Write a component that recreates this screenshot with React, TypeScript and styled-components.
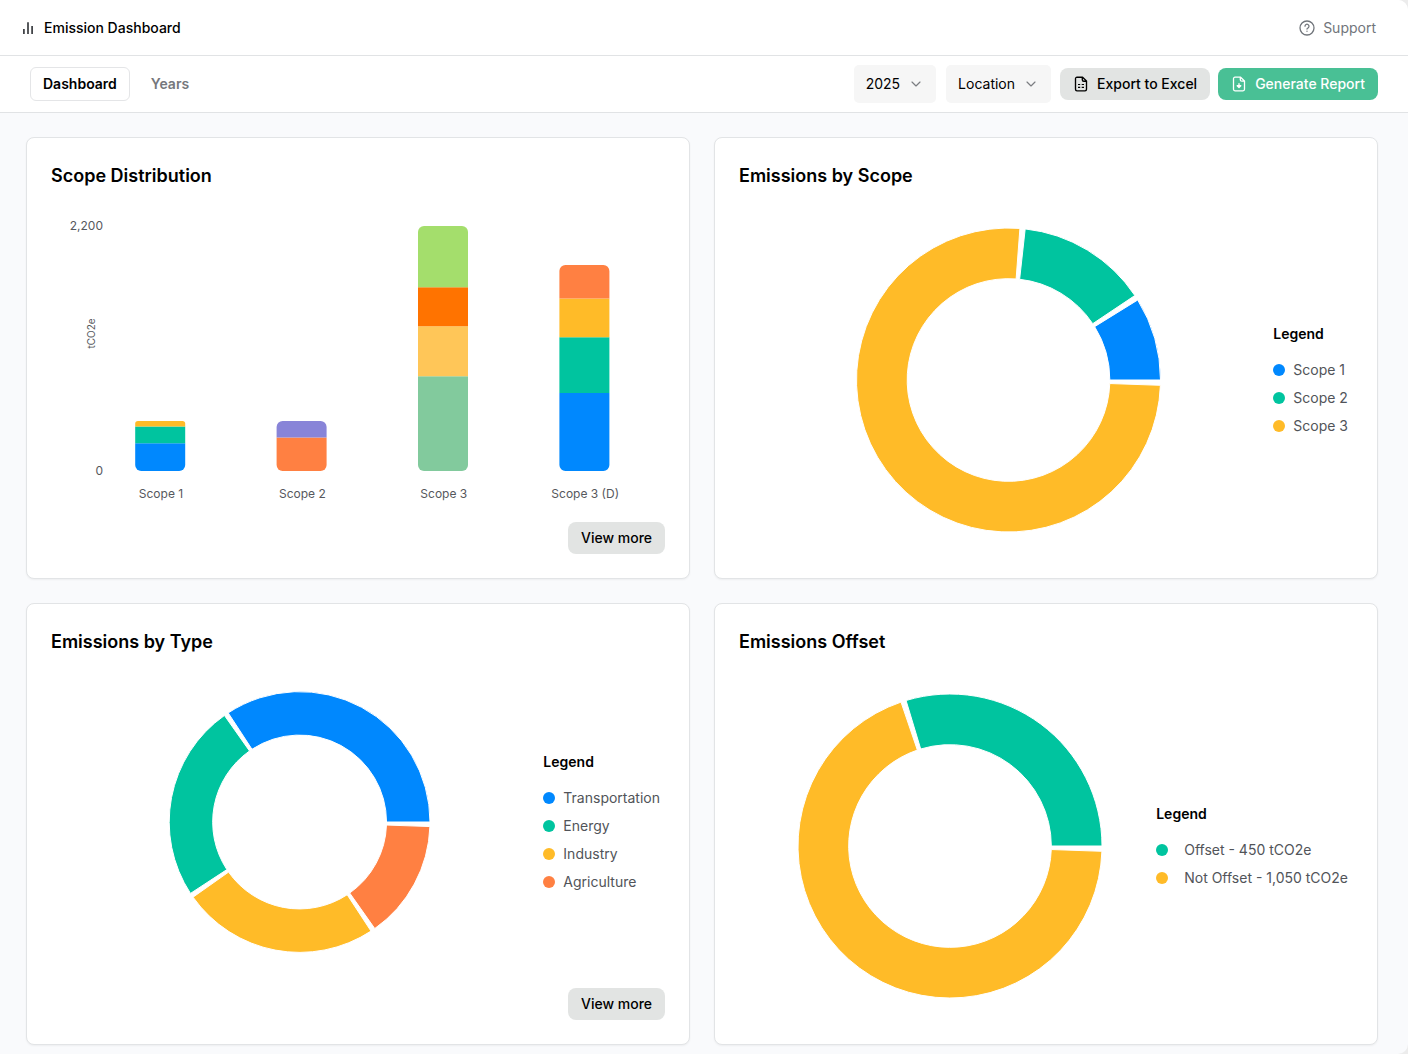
import React from 'react';
import styled, { createGlobalStyle } from 'styled-components';
import { ChevronDown } from 'lucide-react';

const GlobalStyle = createGlobalStyle`
  *, *::before, *::after { box-sizing: border-box; }
  body {
    margin: 0;
    background: #ececec;
    font-family: Inter, "Liberation Sans", sans-serif;
    font-size: 14px;
    line-height: 20px;
    color: #000;
    overflow: hidden;
  }
`;

const Window = styled.div`
  display: flex;
  flex-direction: column;
  height: 1054px;
  background: #f9fafc;
  border-radius: 0 10px 10px 0;
  overflow: hidden;
`;

const Bar = styled.header<{ $height: number; $padding: string }>`
  display: flex;
  flex: none;
  align-items: center;
  justify-content: space-between;
  height: ${(p) => p.$height}px;
  padding: ${(p) => p.$padding};
  background: #fff;
  border-bottom: 1px solid #e1e3e5;
`;

const Cluster = styled.div<{ $gap: number }>`
  display: flex;
  align-items: center;
  gap: ${(p) => p.$gap}px;
`;

const Brand = styled.h1`
  margin: 0;
  font-size: 14px;
  font-weight: 500;
  line-height: 20px;
`;

const Support = styled.a`
  display: flex;
  align-items: center;
  gap: 8px;
  color: #71757b;
`;

const Tab = styled.button<{ $active?: boolean }>`
  height: 34px;
  padding: 0 12px;
  border: 1px solid ${(p) => (p.$active ? '#e4e5e7' : 'transparent')};
  border-radius: 6px;
  background: #fff;
  color: ${(p) => (p.$active ? '#000' : '#75777c')};
  font: 600 14px/20px Inter, sans-serif;
`;

const Select = styled.button`
  display: flex;
  align-items: center;
  gap: 8px;
  height: 38px;
  padding: 0 12px;
  border: 0;
  border-radius: 5px;
  background: #f6f6f6;
  color: #000;
  font: 400 14px/20px Inter, sans-serif;
  svg { color: #7b7d81; }
`;

const Button = styled.button<{ $primary?: boolean }>`
  display: flex;
  align-items: center;
  gap: 8px;
  height: 32px;
  padding: 0 13px;
  border: 0;
  border-radius: 8px;
  background: ${(p) => (p.$primary ? '#49c095' : '#e2e4e3')};
  color: ${(p) => (p.$primary ? '#fff' : '#000')};
  font: 500 14px/20px Inter, sans-serif;
`;

const Grid = styled.main`
  display: grid;
  grid-template-columns: 664px 664px;
  grid-auto-rows: 442px;
  gap: 24px;
  padding: 24px 26px;
`;

const Card = styled.section`
  display: flex;
  flex-direction: column;
  padding: 24px;
  border: 1px solid #e2e4e6;
  border-radius: 8px;
  background: #fff;
  box-shadow: 0 1px 2px rgba(0, 0, 0, 0.05);
`;

const CardTitle = styled.h2`
  margin: 0 0 -1px;
  font-size: 18px;
  font-weight: 600;
  line-height: 28px;
`;

const CardBody = styled.div`
  display: flex;
  flex: 1;
  align-items: center;
  justify-content: space-between;
  min-height: 0;
`;

const CardFooter = styled.footer`
  display: flex;
  justify-content: flex-end;
`;

const Plot = styled.div<{ $left?: number; $top?: number }>`
  display: flex;
  align-self: flex-start;
  padding: ${(p) => p.$top ?? 0}px 0 0 ${(p) => p.$left ?? 0}px;
  svg { display: block; overflow: visible; }
`;

const LegendBox = styled.div<{ $right: number; $top: number }>`
  align-self: flex-start;
  padding: ${(p) => p.$top}px ${(p) => p.$right}px 0 0;
`;

const LegendTitle = styled.h3`
  margin: 0 0 16px;
  font-size: 14px;
  font-weight: 600;
  line-height: 20px;
`;

const LegendList = styled.ul`
  display: grid;
  gap: 8px;
  margin: 0;
  padding: 0;
  list-style: none;
`;

const LegendItem = styled.li<{ $gap: number }>`
  display: flex;
  align-items: center;
  gap: ${(p) => p.$gap}px;
  color: #515459;
  white-space: nowrap;
`;

const Dot = styled.span<{ $color: string }>`
  width: 12px;
  height: 12px;
  border-radius: 50%;
  background: ${(p) => p.$color};
`;

const AxisText = styled.text<{ $size?: number }>`
  fill: #56585d;
  font-size: ${(p) => p.$size ?? 12}px;
`;

const BLUE = '#0088FE';
const GREEN = '#00C49F';
const YELLOW = '#FFBB28';
const ORANGE = '#FF8042';

type Datum = { label: string; value: number; color: string };

const BrandIcon = () => (
  <svg width="16" height="16" viewBox="0 0 16 16" fill="none" stroke="#3a3c40" strokeWidth="1.7">
    <path d="M3.9 9v5M8 2.2V14M12.1 6v8" />
  </svg>
);

const HelpIcon = () => (
  <svg width="16" height="16" viewBox="0 0 16 16" fill="none" stroke="currentColor" strokeWidth="1.3" strokeLinecap="round" strokeLinejoin="round">
    <circle cx="8" cy="8" r="7" />
    <path d="M6 6.2a2 2 0 1 1 3.1 1.7C8.4 8.3 8 8.5 8 9.1M8 11.2v.1" />
  </svg>
);

const SheetIcon = () => (
  <svg width="16" height="16" viewBox="0 0 16 16" fill="none" stroke="currentColor" strokeWidth="1.35" strokeLinejoin="round">
    <path d="M9.6 1.2H4A1.5 1.5 0 0 0 2.5 2.7v10.6A1.5 1.5 0 0 0 4 14.8h8a1.5 1.5 0 0 0 1.5-1.5V5zM9.3 1.3v2.4A1.5 1.5 0 0 0 10.8 5.2h2.6" />
    <path strokeWidth="1.15" d="M5 8.5h2.2M8.7 8.5H11M5 11.4h2.2M8.7 11.4H11" />
  </svg>
);

const DownloadIcon = () => (
  <svg width="16" height="16" viewBox="0 0 16 16" fill="none" stroke="currentColor" strokeWidth="1.3" strokeLinecap="round" strokeLinejoin="round">
    <path d="M9.6 1.2H4A1.5 1.5 0 0 0 2.5 2.7v10.6A1.5 1.5 0 0 0 4 14.8h8a1.5 1.5 0 0 0 1.5-1.5V5zM9.3 1.3v2.4A1.5 1.5 0 0 0 10.8 5.2h2.6" />
    <path d="M8 7.6V11M6.2 9.7 8 11.5l1.8-1.8z" fill="currentColor" />
  </svg>
);

const PAD = 2;

function Donut({ data, radius, shift = 0 }: { data: Datum[]; radius: number; shift?: number }) {
  const inner = (radius * 2) / 3;
  const half = Math.ceil(radius);
  const total = data.reduce((sum, d) => sum + d.value, 0);
  const sweep = 360 - PAD * data.length;
  const point = (r: number, deg: number) => {
    const a = (deg * Math.PI) / 180;
    return `${r * Math.cos(a)} ${-r * Math.sin(a)}`;
  };
  let start = 0;
  return (
    <svg width={half * 2} height={half * 2} viewBox={`${-half - shift} ${-half} ${half * 2} ${half * 2}`}>
      {data.map((d) => {
        const from = start;
        const to = from + (d.value / total) * sweep;
        start = to + PAD;
        const large = to - from > 180 ? 1 : 0;
        return (
          <path
            key={d.label}
            fill={d.color}
            stroke="#fff"
            d={`M${point(radius, from)}A${radius} ${radius} 0 ${large} 0 ${point(radius, to)}L${point(inner, to)}A${inner} ${inner} 0 ${large} 1 ${point(inner, from)}Z`}
          />
        );
      })}
    </svg>
  );
}

const stacks = [
  { label: 'Scope 1', parts: [[250, BLUE], [150, GREEN], [50, YELLOW]] },
  { label: 'Scope 2', parts: [[300, ORANGE], [150, '#8884d8']] },
  { label: 'Scope 3', parts: [[850, '#82ca9d'], [450, '#ffc658'], [350, '#ff7300'], [550, '#a4de6c']] },
  { label: 'Scope 3 (D)', parts: [[700, BLUE], [500, GREEN], [350, YELLOW], [300, ORANGE]] },
] as { label: string; parts: [number, string][] }[];

function segmentPath(x: number, y: number, w: number, h: number, top: number, bottom: number) {
  return `M${x} ${y + top}a${top} ${top} 0 0 1 ${top} ${-top}h${w - 2 * top}a${top} ${top} 0 0 1 ${top} ${top}v${h - top - bottom}a${bottom} ${bottom} 0 0 1 ${-bottom} ${bottom}h${-(w - 2 * bottom)}a${bottom} ${bottom} 0 0 1 ${-bottom} ${-bottom}z`;
}

function StackedBars() {
  const base = 282;
  const scale = 245 / 2200;
  return (
    <svg width="614" height="330" viewBox="0 0 614 330">
      <AxisText x="52" y="41" textAnchor="end">2,200</AxisText>
      <AxisText x="52" y="286" textAnchor="end">0</AxisText>
      <AxisText $size={10} textAnchor="middle" transform="translate(44 144.5) rotate(-90)">tCO2e</AxisText>
      {stacks.map((stack, i) => {
        const x = 84.2 + i * 141.4;
        let y = base;
        return (
          <g key={stack.label}>
            {stack.parts.map(([value, color], j) => {
              const h = value * scale;
              y -= h;
              const top = j === stack.parts.length - 1 ? Math.min(6, h / 2) : 0;
              const bottom = j === 0 ? 6 : 0;
              return <path key={j} d={segmentPath(x, y, 50, h, top, bottom)} fill={color} />;
            })}
            <AxisText x={x + 25.8} y="309" textAnchor="middle">{stack.label}</AxisText>
          </g>
        );
      })}
    </svg>
  );
}

function Legend({ items, right, top, gap = 8 }: { items: Datum[]; right: number; top: number; gap?: number }) {
  return (
    <LegendBox $right={right} $top={top}>
      <LegendTitle>Legend</LegendTitle>
      <LegendList>
        {items.map((d) => (
          <LegendItem key={d.label} $gap={gap}>
            <Dot $color={d.color} />
            {d.label}
          </LegendItem>
        ))}
      </LegendList>
    </LegendBox>
  );
}

const byScope: Datum[] = [
  { label: 'Scope 1', value: 350, color: BLUE },
  { label: 'Scope 2', value: 550, color: GREEN },
  { label: 'Scope 3', value: 3000, color: YELLOW },
];

const byType: Datum[] = [
  { label: 'Transportation', value: 35, color: BLUE },
  { label: 'Energy', value: 25, color: GREEN },
  { label: 'Industry', value: 25, color: YELLOW },
  { label: 'Agriculture', value: 15, color: ORANGE },
];

const offset: Datum[] = [
  { label: 'Offset - 450 tCO2e', value: 450, color: GREEN },
  { label: 'Not Offset - 1,050 tCO2e', value: 1050, color: YELLOW },
];

export default function App() {
  return (
    <>
      <GlobalStyle />
      <Window>
        <Bar $height={56} $padding="0 32px 0 20px">
          <Cluster $gap={8}>
            <BrandIcon />
            <Brand>Emission Dashboard</Brand>
          </Cluster>
          <Support>
            <HelpIcon />
            Support
          </Support>
        </Bar>
        <Bar $height={57} $padding="0 30px">
          <Cluster $gap={8}>
            <Tab $active>Dashboard</Tab>
            <Tab>Years</Tab>
          </Cluster>
          <Cluster $gap={9}>
            <Cluster $gap={10}>
              <Select>2025<ChevronDown size={16} strokeWidth={1.75} /></Select>
              <Select>Location<ChevronDown size={16} strokeWidth={1.75} /></Select>
            </Cluster>
            <Cluster $gap={8}>
              <Button><SheetIcon />Export to Excel</Button>
              <Button $primary><DownloadIcon />Generate Report</Button>
            </Cluster>
          </Cluster>
        </Bar>
        <Grid>
          <Card>
            <CardTitle>Scope Distribution</CardTitle>
            <CardBody>
              <Plot><StackedBars /></Plot>
            </CardBody>
            <CardFooter><Button>View more</Button></CardFooter>
          </Card>
          <Card>
            <CardTitle>Emissions by Scope</CardTitle>
            <CardBody>
              <Plot $left={117} $top={39}><Donut data={byScope} radius={152} shift={0.5} /></Plot>
              <Legend items={byScope} right={5} top={135} />
            </CardBody>
          </Card>
          <Card>
            <CardTitle>Emissions by Type</CardTitle>
            <CardBody>
              <Plot $left={118} $top={36}><Donut data={byType} radius={130.4} shift={-0.4} /></Plot>
              <Legend items={byType} right={5} top={97} />
            </CardBody>
            <CardFooter><Button>View more</Button></CardFooter>
          </Card>
          <Card>
            <CardTitle>Emissions Offset</CardTitle>
            <CardBody>
              <Plot $left={59} $top={39}><Donut data={offset} radius={152} /></Plot>
              <Legend items={offset} right={5} top={149} gap={16} />
            </CardBody>
          </Card>
        </Grid>
      </Window>
    </>
  );
}
